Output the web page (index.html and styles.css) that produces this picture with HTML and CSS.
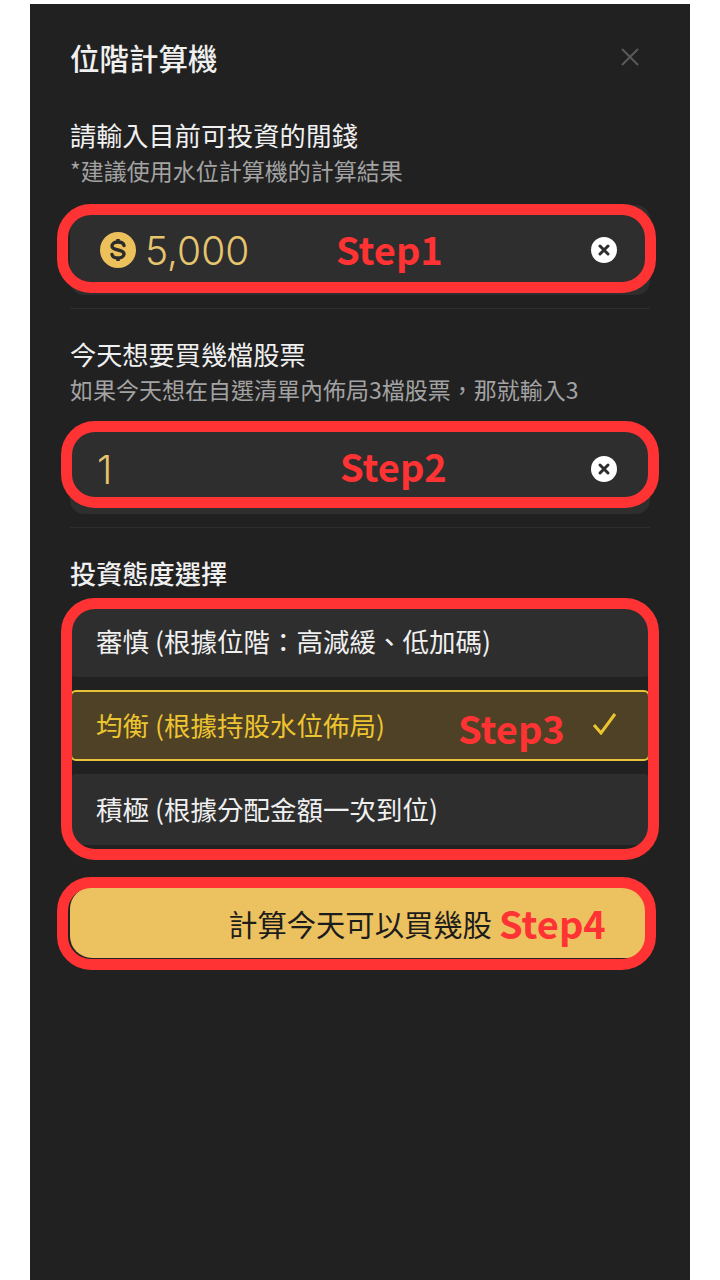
FILE: index.html
```html
<!DOCTYPE html>
<html lang="zh-Hant">
    <head>
        <meta charset="utf-8" />
        <title>位階計算機</title>
        <link rel="stylesheet" href="styles.css">
    </head>
    <body>
        <div class="panel">
            <div class="header">
                <span class="title">位階計算機</span>
                <svg class="closeIcon" width="20" height="20" viewBox="0 0 20 20">
                    <path d="M2 2 L18 18 M18 2 L2 18" stroke="#5a5a5a" stroke-width="2" fill="none" />
                </svg>
            </div>

            <div class="label firstLabel">請輸入目前可投資的閒錢</div>
            <div class="hint">*建議使用水位計算機的計算結果</div>
            <div class="field">
                <svg class="coin" width="36" height="36" viewBox="0 0 36 36">
                    <circle cx="18" cy="18" r="18" fill="#ecc05a" />
                    <path d="M24 13.5 C23.5 11 21 10 18 10 C14.5 10 12 11.5 12 14 C12 16.5 14.5 17.3 18 18 C21.5 18.7 24 19.5 24 22 C24 24.5 21.5 26 18 26 C15 26 12.5 25 12 22.5" stroke="#2b2b2b" stroke-width="3.4" fill="none" stroke-linecap="round" />
                    <path d="M18 7 V10 M18 26 V29" stroke="#2b2b2b" stroke-width="3.4" fill="none" />
                </svg>
                <span class="fieldValue">5,000</span>
                <svg class="clearIcon" width="26" height="26" viewBox="0 0 26 26">
                    <circle cx="13" cy="13" r="13" fill="#fff" />
                    <path d="M9 9 L17 17 M17 9 L9 17" stroke="#2e2e2e" stroke-width="3" stroke-linecap="round" />
                </svg>
            </div>
            <div class="divider"></div>

            <div class="label">今天想要買幾檔股票</div>
            <div class="hint">如果今天想在自選清單內佈局3檔股票，那就輸入3</div>
            <div class="field">
                <span class="fieldValue">1</span>
                <svg class="clearIcon" width="26" height="26" viewBox="0 0 26 26">
                    <circle cx="13" cy="13" r="13" fill="#fff" />
                    <path d="M9 9 L17 17 M17 9 L9 17" stroke="#2e2e2e" stroke-width="3" stroke-linecap="round" />
                </svg>
            </div>
            <div class="divider"></div>

            <div class="label sectionTitle">投資態度選擇</div>
            <div class="options">
                <div class="option">審慎 (根據位階：高減緩、低加碼)</div>
                <div class="option selected">
                    <span>均衡 (根據持股水位佈局)</span>
                    <svg class="checkIcon" width="26" height="22" viewBox="0 0 26 22">
                        <path d="M2 12 L9 20 L23 1" stroke="#ecc530" stroke-width="3" fill="none" />
                    </svg>
                </div>
                <div class="option">積極 (根據分配金額一次到位)</div>
            </div>

            <div class="submit">計算今天可以買幾股</div>

            <!-- red annotations drawn over the screenshot -->
            <div class="mark markOne"></div>
            <div class="mark markTwo"></div>
            <div class="mark markThree"></div>
            <div class="mark markFour"></div>
            <span class="step stepOne">Step1</span>
            <span class="step stepTwo">Step2</span>
            <span class="step stepThree">Step3</span>
            <span class="step stepFour">Step4</span>
        </div>
    </body>
</html>
```

FILE: styles.css
```css
html, body {
    margin: 0;
    background-color: #ffffff;
    font-family: "Noto Sans CJK TC", "Noto Sans", sans-serif;
}

.panel {
    position: relative;
    box-sizing: border-box;
    width: 660px;
    height: 1276px;
    margin: 4px 0 0 30px;
    padding: 33px 40px 0;
    background-color: #212121;
    color: #f0f0f0;
    overflow: hidden;
}

.header {
    display: flex;
    justify-content: space-between;
    align-items: center;
    height: 40px;
}

.title {
    font-size: 29.5px;
    font-weight: 500;
    line-height: 40px;
}

.closeIcon {
    margin-right: 10px;
}

.label {
    font-size: 26.2px;
    line-height: 36px;
    margin-top: 27px;
}

.firstLabel {
    margin-top: 40px;
}

.sectionTitle {
    font-weight: 500;
}

.hint {
    font-size: 23px;
    line-height: 30px;
    margin-top: 2px;
    color: #a3a3a3;
}

.field {
    display: flex;
    align-items: center;
    height: 90px;
    margin-top: 20px;
    padding: 0 33px 0 27px;
    background-color: #2e2e2e;
    border-radius: 14px;
}

.coin {
    margin: 0 9px 0 3px;
}

.fieldValue {
    flex: 1;
    font-family: Inter, "Noto Sans", sans-serif;
    font-size: 39px;
    font-weight: 300;
    color: #e6c56f;
}

.divider {
    height: 1px;
    margin-top: 13px;
    background-color: #2d2d2d;
}

.options {
    display: flex;
    flex-direction: column;
    gap: 13px;
    margin-top: 15px;
}

.option {
    display: flex;
    justify-content: space-between;
    align-items: center;
    height: 71px;
    box-sizing: border-box;
    padding: 0 30px 3px 26px;
    background-color: #2e2e2e;
    border-radius: 6px;
    font-size: 26.5px;
}

.selected {
    border: 2px solid #e8c33a;
    padding-left: 24px;
    background-color: #4f4126;
    color: #ecc530;
}

.submit {
    display: flex;
    justify-content: center;
    align-items: center;
    height: 71px;
    margin-top: 42px;
    background-color: #ecc260;
    border-radius: 22px;
    color: #1c1c1c;
    font-size: 29.3px;
}

.mark {
    position: absolute;
    box-sizing: border-box;
    border: 11px solid #ff3333;
    border-radius: 34px;
}

.markOne {
    left: 27px;
    top: 200px;
    width: 599px;
    height: 89px;
}

.markTwo {
    left: 31px;
    top: 417px;
    width: 598px;
    height: 87px;
}

.markThree {
    left: 31px;
    top: 594px;
    width: 598px;
    height: 262px;
}

.markFour {
    left: 27px;
    top: 873px;
    width: 599px;
    height: 93px;
}

.step {
    position: absolute;
    font-size: 38px;
    font-weight: 700;
    line-height: 50px;
    color: #ff3333;
}

.stepOne {
    left: 306px;
    top: 220px;
}

.stepTwo {
    left: 310px;
    top: 437px;
}

.stepThree {
    left: 428px;
    top: 699px;
}

.stepFour {
    left: 469px;
    top: 894px;
}
```
